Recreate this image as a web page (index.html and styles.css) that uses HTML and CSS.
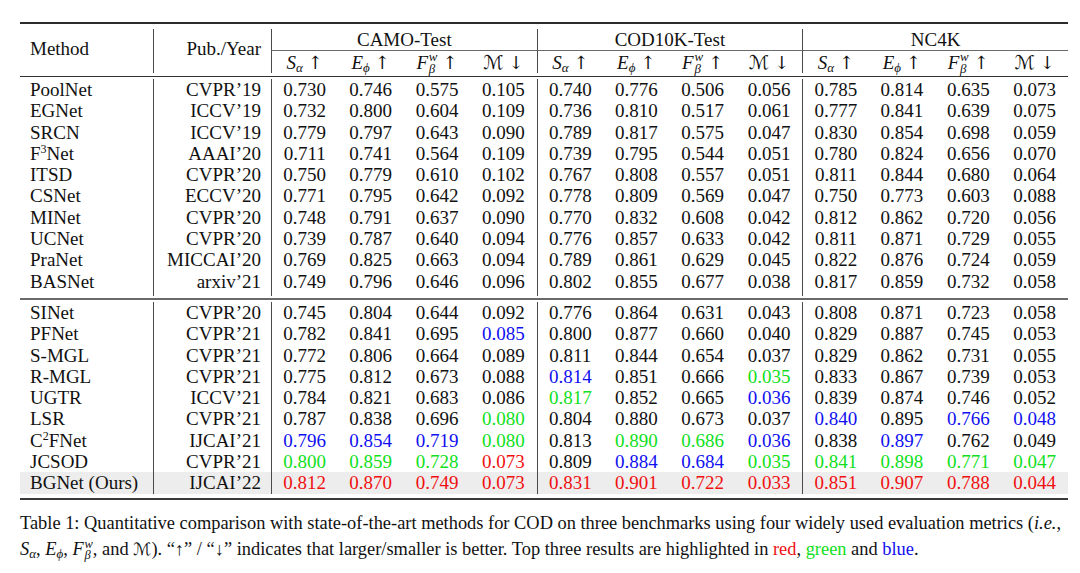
FILE: index.html
```html
<!DOCTYPE html>
<html lang="en">
<head>
<meta charset="utf-8">
<title>Table 1</title>
<link rel="stylesheet" href="styles.css">
</head>
<body>
<div class="page">
<table class="results">
  <colgroup>
    <col class="c-method"><col class="c-pub">
    <col class="c-num"><col class="c-num"><col class="c-num"><col class="c-num">
    <col class="c-num"><col class="c-num"><col class="c-num"><col class="c-num">
    <col class="c-num"><col class="c-num"><col class="c-num"><col class="c-num">
  </colgroup>
  <thead>
    <tr class="rule rule-top"><td colspan="14"></td></tr>
    <tr class="sep sep-5"><td colspan="14"></td></tr>
    <tr class="h1">
      <th rowspan="2" class="method hm">Method</th>
      <th rowspan="2" class="pub vl hm">Pub./Year</th>
      <th colspan="4" class="grp vl">CAMO-Test</th>
      <th colspan="4" class="grp vl">COD10K-Test</th>
      <th colspan="4" class="grp vl">NC4K</th>
    </tr>
    <tr class="h2">
      <th class="vl"><span class="mh"><span><i>S</i><sub>α</sub></span><span class="ar">↑</span></span></th>
      <th><span class="mh"><span><i>E</i><sub>ϕ</sub></span><span class="ar">↑</span></span></th>
      <th><span class="mh"><span><i>F</i><span class="ss"><span class="sup">w</span><span class="sub">β</span></span></span><span class="ar">↑</span></span></th>
      <th><span class="mh"><span class="cal">ℳ</span><span class="ar">↓</span></span></th>
      <th class="vl"><span class="mh"><span><i>S</i><sub>α</sub></span><span class="ar">↑</span></span></th>
      <th><span class="mh"><span><i>E</i><sub>ϕ</sub></span><span class="ar">↑</span></span></th>
      <th><span class="mh"><span><i>F</i><span class="ss"><span class="sup">w</span><span class="sub">β</span></span></span><span class="ar">↑</span></span></th>
      <th><span class="mh"><span class="cal">ℳ</span><span class="ar">↓</span></span></th>
      <th class="vl"><span class="mh"><span><i>S</i><sub>α</sub></span><span class="ar">↑</span></span></th>
      <th><span class="mh"><span><i>E</i><sub>ϕ</sub></span><span class="ar">↑</span></span></th>
      <th><span class="mh"><span><i>F</i><span class="ss"><span class="sup">w</span><span class="sub">β</span></span></span><span class="ar">↑</span></span></th>
      <th><span class="mh"><span class="cal">ℳ</span><span class="ar">↓</span></span></th>
    </tr>
    <tr class="sep sep-3"><td colspan="14"></td></tr>
    <tr class="rule rule-head"><td colspan="14"></td></tr>
  </thead>
  <tbody class="sec sec-1">
    <tr class="sep sep-2"><td colspan="14"></td></tr>
    <tr><td class="method">PoolNet</td><td class="pub vl">CVPR’19</td><td class="vl">0.730</td><td>0.746</td><td>0.575</td><td>0.105</td><td class="vl">0.740</td><td>0.776</td><td>0.506</td><td>0.056</td><td class="vl">0.785</td><td>0.814</td><td>0.635</td><td>0.073</td></tr>
    <tr><td class="method">EGNet</td><td class="pub vl">ICCV’19</td><td class="vl">0.732</td><td>0.800</td><td>0.604</td><td>0.109</td><td class="vl">0.736</td><td>0.810</td><td>0.517</td><td>0.061</td><td class="vl">0.777</td><td>0.841</td><td>0.639</td><td>0.075</td></tr>
    <tr><td class="method">SRCN</td><td class="pub vl">ICCV’19</td><td class="vl">0.779</td><td>0.797</td><td>0.643</td><td>0.090</td><td class="vl">0.789</td><td>0.817</td><td>0.575</td><td>0.047</td><td class="vl">0.830</td><td>0.854</td><td>0.698</td><td>0.059</td></tr>
    <tr><td class="method">F<sup class="pw">3</sup>Net</td><td class="pub vl">AAAI’20</td><td class="vl">0.711</td><td>0.741</td><td>0.564</td><td>0.109</td><td class="vl">0.739</td><td>0.795</td><td>0.544</td><td>0.051</td><td class="vl">0.780</td><td>0.824</td><td>0.656</td><td>0.070</td></tr>
    <tr><td class="method">ITSD</td><td class="pub vl">CVPR’20</td><td class="vl">0.750</td><td>0.779</td><td>0.610</td><td>0.102</td><td class="vl">0.767</td><td>0.808</td><td>0.557</td><td>0.051</td><td class="vl">0.811</td><td>0.844</td><td>0.680</td><td>0.064</td></tr>
    <tr><td class="method">CSNet</td><td class="pub vl">ECCV’20</td><td class="vl">0.771</td><td>0.795</td><td>0.642</td><td>0.092</td><td class="vl">0.778</td><td>0.809</td><td>0.569</td><td>0.047</td><td class="vl">0.750</td><td>0.773</td><td>0.603</td><td>0.088</td></tr>
    <tr><td class="method">MINet</td><td class="pub vl">CVPR’20</td><td class="vl">0.748</td><td>0.791</td><td>0.637</td><td>0.090</td><td class="vl">0.770</td><td>0.832</td><td>0.608</td><td>0.042</td><td class="vl">0.812</td><td>0.862</td><td>0.720</td><td>0.056</td></tr>
    <tr><td class="method">UCNet</td><td class="pub vl">CVPR’20</td><td class="vl">0.739</td><td>0.787</td><td>0.640</td><td>0.094</td><td class="vl">0.776</td><td>0.857</td><td>0.633</td><td>0.042</td><td class="vl">0.811</td><td>0.871</td><td>0.729</td><td>0.055</td></tr>
    <tr><td class="method">PraNet</td><td class="pub vl">MICCAI’20</td><td class="vl">0.769</td><td>0.825</td><td>0.663</td><td>0.094</td><td class="vl">0.789</td><td>0.861</td><td>0.629</td><td>0.045</td><td class="vl">0.822</td><td>0.876</td><td>0.724</td><td>0.059</td></tr>
    <tr class="last"><td class="method">BASNet</td><td class="pub vl">arxiv’21</td><td class="vl">0.749</td><td>0.796</td><td>0.646</td><td>0.096</td><td class="vl">0.802</td><td>0.855</td><td>0.677</td><td>0.038</td><td class="vl">0.817</td><td>0.859</td><td>0.732</td><td>0.058</td></tr>
    <tr class="sep sep-2"><td colspan="14"></td></tr>
    <tr class="rule rule-sec"><td colspan="14"></td></tr>
  </tbody>
  <tbody class="sec sec-2">
    <tr class="sep sep-2"><td colspan="14"></td></tr>
    <tr><td class="method">SINet</td><td class="pub vl">CVPR’20</td><td class="vl">0.745</td><td>0.804</td><td>0.644</td><td>0.092</td><td class="vl">0.776</td><td>0.864</td><td>0.631</td><td>0.043</td><td class="vl">0.808</td><td>0.871</td><td>0.723</td><td>0.058</td></tr>
    <tr><td class="method">PFNet</td><td class="pub vl">CVPR’21</td><td class="vl">0.782</td><td>0.841</td><td>0.695</td><td class="b">0.085</td><td class="vl">0.800</td><td>0.877</td><td>0.660</td><td>0.040</td><td class="vl">0.829</td><td>0.887</td><td>0.745</td><td>0.053</td></tr>
    <tr><td class="method">S-MGL</td><td class="pub vl">CVPR’21</td><td class="vl">0.772</td><td>0.806</td><td>0.664</td><td>0.089</td><td class="vl">0.811</td><td>0.844</td><td>0.654</td><td>0.037</td><td class="vl">0.829</td><td>0.862</td><td>0.731</td><td>0.055</td></tr>
    <tr><td class="method">R-MGL</td><td class="pub vl">CVPR’21</td><td class="vl">0.775</td><td>0.812</td><td>0.673</td><td>0.088</td><td class="vl b">0.814</td><td>0.851</td><td>0.666</td><td class="g">0.035</td><td class="vl">0.833</td><td>0.867</td><td>0.739</td><td>0.053</td></tr>
    <tr><td class="method">UGTR</td><td class="pub vl">ICCV’21</td><td class="vl">0.784</td><td>0.821</td><td>0.683</td><td>0.086</td><td class="vl g">0.817</td><td>0.852</td><td>0.665</td><td class="b">0.036</td><td class="vl">0.839</td><td>0.874</td><td>0.746</td><td>0.052</td></tr>
    <tr><td class="method">LSR</td><td class="pub vl">CVPR’21</td><td class="vl">0.787</td><td>0.838</td><td>0.696</td><td class="g">0.080</td><td class="vl">0.804</td><td>0.880</td><td>0.673</td><td>0.037</td><td class="vl b">0.840</td><td>0.895</td><td class="b">0.766</td><td class="b">0.048</td></tr>
    <tr><td class="method">C<sup class="pw">2</sup>FNet</td><td class="pub vl">IJCAI’21</td><td class="vl b">0.796</td><td class="b">0.854</td><td class="b">0.719</td><td class="g">0.080</td><td class="vl">0.813</td><td class="g">0.890</td><td class="g">0.686</td><td class="b">0.036</td><td class="vl">0.838</td><td class="b">0.897</td><td>0.762</td><td>0.049</td></tr>
    <tr><td class="method">JCSOD</td><td class="pub vl">CVPR’21</td><td class="vl g">0.800</td><td class="g">0.859</td><td class="g">0.728</td><td class="r">0.073</td><td class="vl">0.809</td><td class="b">0.884</td><td class="b">0.684</td><td class="g">0.035</td><td class="vl g">0.841</td><td class="g">0.898</td><td class="g">0.771</td><td class="g">0.047</td></tr>
    <tr class="ours"><td class="method">BGNet (Ours)</td><td class="pub vl">IJCAI’22</td><td class="vl r">0.812</td><td class="r">0.870</td><td class="r">0.749</td><td class="r">0.073</td><td class="vl r">0.831</td><td class="r">0.901</td><td class="r">0.722</td><td class="r">0.033</td><td class="vl r">0.851</td><td class="r">0.907</td><td class="r">0.788</td><td class="r">0.044</td></tr>
    <tr class="sep sep-4"><td colspan="14"></td></tr>
    <tr class="rule rule-bottom"><td colspan="14"></td></tr>
  </tbody>
</table>
<p class="caption">Table 1: Quantitative comparison with state-of-the-art methods for COD on three benchmarks using four widely used evaluation metrics (<i>i.e.</i>,<br><i>S</i><sub>α</sub>, <i>E</i><sub>ϕ</sub>, <i>F</i><span class="ss"><span class="sup">w</span><span class="sub">β</span></span>, and <span class="cal">ℳ</span>). “↑” / “↓” indicates that larger/smaller is better. Top three results are highlighted in <span class="r">red</span>, <span class="g">green</span> and <span class="b">blue</span>.</p>
</div>
</body>
</html>
```

FILE: styles.css
```css
html, body {
  margin: 0;
  padding: 0;
  background: #ffffff;
}

.page {
  padding: 22px 0 0 20px;
  font-family: "Liberation Serif", "DejaVu Serif", serif;
  color: #111111;
}

.results {
  width: 1048px;
  table-layout: fixed;
  border-collapse: separate;
  border-spacing: 0;
  font-size: 19px;
}

.c-method { width: 133px; }
.c-pub { width: 118px; }
.c-num { width: 66.42px; }

.results td,
.results th {
  padding: 0;
  font-weight: normal;
  line-height: 21.3px;
  height: 21.3px;
  text-align: center;
  white-space: nowrap;
}

/* rules and separators */
.results tr.rule td,
.results tr.sep td {
  height: auto;
  line-height: 0;
  font-size: 0;
  padding: 0;
}
.rule-top td { height: 2px !important; background: #2b2b2b; }
.rule-head td { height: 1px !important; background: #333333; }
.rule-sec td { height: 2px !important; background: #6a6a6a; }
.rule-bottom td { height: 2px !important; background: #3a3a3a; }
.sep-2 td { height: 2px !important; }
.sep-3 td { height: 3px !important; }
.sep-4 td { height: 4px !important; }
.sep-5 td { height: 5px !important; }

.vl { border-left: 1px solid #4a4a4a; }

.results .method {
  text-align: left;
  padding-left: 10px;
}
.results .pub {
  text-align: right;
  padding-right: 10px;
}

/* header */
.h1 th {
  height: 21px;
  line-height: 21px;
}
.h1 .grp {
  border-bottom: 1px solid #6a6a6a;
}
.h1 .hm {
  vertical-align: middle;
  padding-bottom: 6px;
}
.h2 th {
  height: 22px;
  line-height: 0;
  vertical-align: top;
}

.mh {
  display: inline-flex;
  height: 22px;
  align-items: center;
  justify-content: center;
  gap: 5px;
  line-height: 19px;
  vertical-align: top;
}

i { font-style: italic; }

.results sub,
.caption sub {
  font-size: 13px;
  font-style: italic;
  line-height: 0;
  vertical-align: -3px;
}

.ar {
  font-family: "DejaVu Serif", "Liberation Serif", serif;
  font-size: 18px;
}

/* stacked super/subscript (F with w over beta) */
.ss {
  display: inline-block;
  position: relative;
  width: 0.5em;
  height: 0.72em;
  font-style: italic;
}
.ss .sup,
.ss .sub {
  position: absolute;
  left: 0.06em;
  font-size: 0.68em;
  line-height: 1;
}
.ss .sup { top: -0.3em; }
.ss .sub { top: 0.62em; }

.cal {
  font-family: "DejaVu Serif", "DejaVu Sans", serif;
  font-style: italic;
}

.pw {
  font-size: 12px;
  line-height: 0;
  vertical-align: 7px;
}

/* highlight colors */
.r { color: #f01010; }
.g { color: #10e020; }
.b { color: #1010f0; }

.ours td {
  background: #ededed;
}

.last td {
  height: 25.3px;
  vertical-align: top;
}

/* caption */
.caption {
  margin: 10px 0 0 0;
  font-size: 18.4px;
  line-height: 26px;
  white-space: nowrap;
  color: #111111;
}
.caption .cal { font-size: 17px; }
```
